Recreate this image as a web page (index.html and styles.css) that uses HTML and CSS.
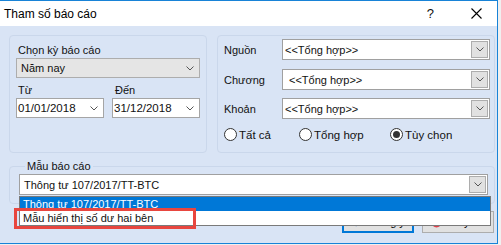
FILE: index.html
```html
<!DOCTYPE html>
<html lang="vi">
<head>
    <meta charset="UTF-8">
    <title>Tham số báo cáo</title>
    <link rel="stylesheet" href="styles.css">
</head>
<body>
    <div class="window">
        <div class="titlebar">
            <span class="title">Tham số báo cáo</span>
            <span class="help">?</span>
            <svg class="close" width="11" height="11" viewBox="0 0 11 11">
                <path d="M0.5 0.5 L10.5 10.5 M10.5 0.5 L0.5 10.5" stroke="#000" stroke-width="1.1"/>
            </svg>
        </div>

        <div class="content">
            <div class="top-row">
                <!-- ky bao cao -->
                <div class="group group-period">
                    <div class="label">Chọn kỳ báo cáo</div>
                    <div class="combo combo-grey">
                        <span>Năm nay</span>
                        <svg class="chev" width="8" height="5" viewBox="0 0 8 5"><path d="M0.5 0.5 L4 4 L7.5 0.5" fill="none" stroke="#555"/></svg>
                    </div>
                    <div class="dates">
                        <div class="date-col">
                            <div class="label">Từ</div>
                            <div class="combo date">
                                <span>01/01/2018</span>
                                <svg class="chev" width="8" height="5" viewBox="0 0 8 5"><path d="M0.5 0.5 L4 4 L7.5 0.5" fill="none" stroke="#555"/></svg>
                            </div>
                        </div>
                        <div class="date-col">
                            <div class="label label-den">Đến</div>
                            <div class="combo date">
                                <span>31/12/2018</span>
                                <svg class="chev" width="8" height="5" viewBox="0 0 8 5"><path d="M0.5 0.5 L4 4 L7.5 0.5" fill="none" stroke="#555"/></svg>
                            </div>
                        </div>
                    </div>
                </div>

                <!-- nguon / chuong / khoan -->
                <div class="group group-filter">
                    <div class="field-row">
                        <span class="field-label">Nguồn</span>
                        <div class="combo combo-wide">
                            <span>&lt;&lt;Tổng hợp&gt;&gt;</span>
                            <span class="drop-btn"><svg width="8" height="5" viewBox="0 0 8 5"><path d="M0.5 0.5 L4 4 L7.5 0.5" fill="none" stroke="#555"/></svg></span>
                        </div>
                    </div>
                    <div class="field-row row-2">
                        <span class="field-label">Chương</span>
                        <div class="combo combo-wide">
                            <span class="indent">&lt;&lt;Tổng hợp&gt;&gt;</span>
                            <span class="drop-btn"><svg width="8" height="5" viewBox="0 0 8 5"><path d="M0.5 0.5 L4 4 L7.5 0.5" fill="none" stroke="#555"/></svg></span>
                        </div>
                    </div>
                    <div class="field-row row-3">
                        <span class="field-label">Khoản</span>
                        <div class="combo combo-wide">
                            <span>&lt;&lt;Tổng hợp&gt;&gt;</span>
                            <span class="drop-btn"><svg width="8" height="5" viewBox="0 0 8 5"><path d="M0.5 0.5 L4 4 L7.5 0.5" fill="none" stroke="#555"/></svg></span>
                        </div>
                    </div>
                    <div class="radios">
                        <label class="radio r1"><span class="dot"></span>Tất cả</label>
                        <label class="radio r2"><span class="dot"></span>Tổng hợp</label>
                        <label class="radio"><span class="dot checked"></span>Tùy chọn</label>
                    </div>
                </div>
            </div>

            <!-- mau bao cao -->
            <fieldset class="group group-template">
                <legend>Mẫu báo cáo</legend>
                <div class="combo combo-template">
                    <span>Thông tư 107/2017/TT-BTC</span>
                    <span class="drop-btn"><svg width="8" height="5" viewBox="0 0 8 5"><path d="M0.5 0.5 L4 4 L7.5 0.5" fill="none" stroke="#555"/></svg></span>
                </div>
                <ul class="drop-list">
                    <li class="selected">Thông tư 107/2017/TT-BTC</li>
                    <li>Mẫu hiển thị số dư hai bên</li>
                </ul>
                <div class="mark"></div>
            </fieldset>

            <div class="buttons">
                <button class="btn btn-ok">
                    <svg width="10" height="10" viewBox="0 0 10 10"><path d="M1 5 L4 8 L9 1" fill="none" stroke="#1f6fd0" stroke-width="2"/></svg>
                    Đồng ý
                </button>
                <button class="btn btn-cancel">
                    <svg width="11" height="11" viewBox="0 0 11 11"><circle cx="5.5" cy="5.5" r="5" fill="#e0404a"/></svg>
                    Hủy bỏ
                </button>
            </div>
        </div>
    </div>
</body>
</html>
```

FILE: styles.css
```css
* {
    margin: 0;
    padding: 0;
    box-sizing: border-box;
}

body {
    width: 501px;
    height: 245px;
    overflow: hidden;
    background-color: #f0f0f0;
    font-family: "Liberation Sans", Arial, sans-serif;
    font-size: 11px;
    color: #111;
}

.window {
    width: 498px;
    height: 244px;
    border: 1px solid #1883d7;
    border-left: 0;
    background-color: #d9e4f5;
    display: flex;
    flex-direction: column;
    overflow: hidden;
}

.titlebar {
    height: 25px;
    flex: none;
    background-color: #fff;
    display: flex;
    align-items: center;
    padding-left: 4px;
}

.title {
    font-size: 12px;
    flex: 1;
    padding-top: 1px;
    color: #000;
}

.help {
    font-size: 13px;
    margin-right: 37px;
}

.close {
    margin-right: 15px;
}

.content {
    padding: 9px 3px 0 9px;
}

.top-row {
    display: flex;
    gap: 10px;
}

.group {
    border: 1px solid #cad7eb;
    border-radius: 4px;
}

.label {
    line-height: 15px;
    padding-left: 2px;
}

.group-period {
    width: 199px;
    height: 118px;
    padding: 7px 6px 0 6px;
}

.combo {
    height: 20px;
    border: 1px solid #a5a5a5;
    background-color: #fff;
    display: flex;
    align-items: center;
    padding-left: 3px;
    white-space: nowrap;
}

.combo span {
    flex: 1;
}

.combo-grey {
    width: 184px;
    background-color: #e5e5e5;
    border-color: #adadad;
    padding-left: 4px;
}

.chev {
    margin-right: 5px;
}

.dates {
    display: flex;
    gap: 8px;
    margin-top: 5px;
}

.label-den {
    padding-left: 3px;
}

.date {
    width: 88px;
    padding-left: 1px;
    font-size: 11.5px;
}

.group-filter {
    width: 278px;
    height: 118px;
    padding: 3px 4px 0 6px;
}

.field-row {
    display: flex;
    align-items: center;
}

.row-2 {
    margin-top: 9px;
}

.row-3 {
    margin-top: 8px;
}

.field-label {
    width: 58px;
}

.combo-wide {
    width: 208px;
    height: 21px;
    padding-left: 2px;
    padding-right: 1px;
    border-color: #a0a0a0;
}

.indent {
    padding-left: 4px;
}

.drop-btn {
    flex: none !important;
    width: 17px;
    height: 17px;
    border: 1px solid #adadad;
    background-color: #e1e1e1;
    display: flex;
    align-items: center;
    justify-content: center;
}

.radios {
    display: flex;
    align-items: center;
    margin-top: 9px;
    font-size: 11.5px;
}

.radio {
    display: flex;
    align-items: center;
    gap: 2px;
}

.r1 {
    width: 75px;
}

.r2 {
    width: 91px;
}

.dot {
    width: 13px;
    height: 13px;
    border: 1px solid #333;
    border-radius: 50%;
    background-color: #fff;
    display: flex;
    align-items: center;
    justify-content: center;
}

.dot.checked::after {
    content: "";
    width: 7px;
    height: 7px;
    border-radius: 50%;
    background-color: #333;
}

.group-template {
    position: relative;
    width: 486px;
    height: 45px;
    margin-top: 6px;
    padding: 0 6px 0 9px;
}

.group-template legend {
    margin-left: 6px;
    padding: 0 2px;
    line-height: 15px;
    font-size: 11px;
}

.combo-template {
    width: 469px;
    height: 21px;
    padding-left: 4px;
    padding-right: 1px;
    border-color: #a0a0a0;
}

.drop-list {
    position: absolute;
    left: 9px;
    top: 22px;
    width: 472px;
    height: 30px;
    list-style: none;
    border: 1px solid #7a7a7a;
    background-color: #fff;
    z-index: 2;
}

.drop-list li {
    height: 14px;
    line-height: 14px;
    padding-left: 3px;
}

.drop-list li.selected {
    background-color: #0078d7;
    color: #fff;
}

.mark {
    position: absolute;
    left: 4px;
    top: 34px;
    width: 182px;
    height: 21px;
    border: 3px solid #e8463f;
    z-index: 3;
}

.buttons {
    display: flex;
    justify-content: flex-end;
    gap: 8px;
    margin-top: 7px;
}

.btn {
    width: 72px;
    height: 22px;
    border: 1px solid #adadad;
    background-color: #e1e1e1;
    font-family: inherit;
    font-size: 11px;
    display: flex;
    align-items: center;
    gap: 8px;
    padding-left: 8px;
}

.btn-ok {
    border: 2px solid #0078d7;
}
```
